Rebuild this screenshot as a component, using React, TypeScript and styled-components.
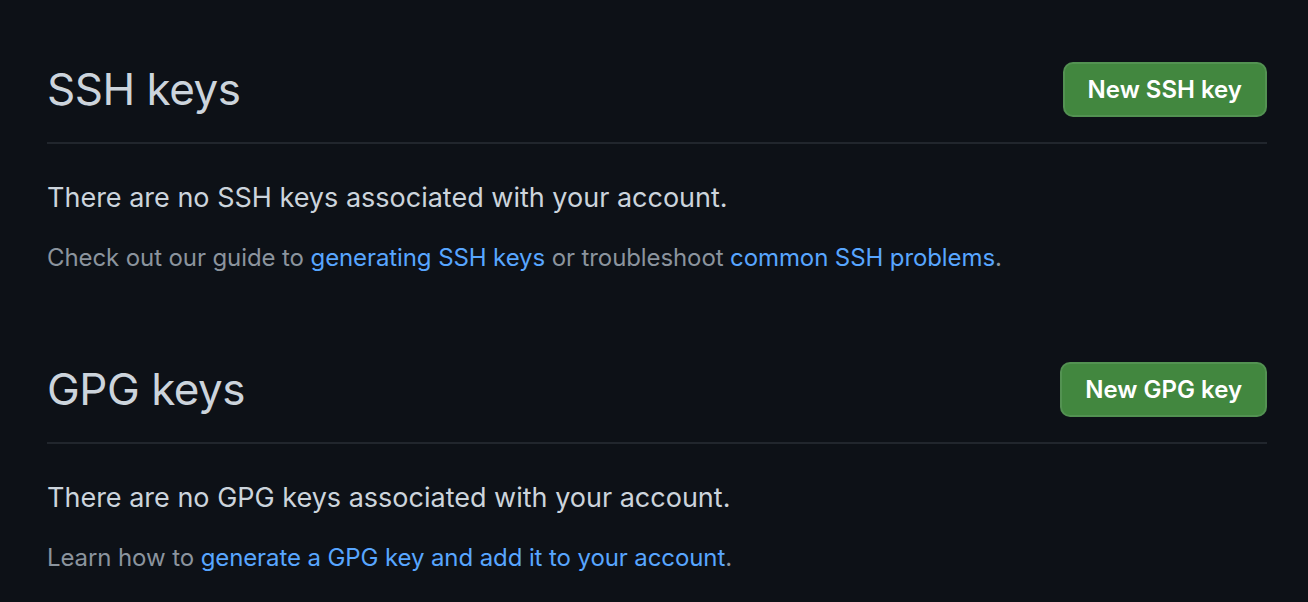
import React from 'react';
import styled, { createGlobalStyle } from 'styled-components';

const GlobalStyle = createGlobalStyle`
  *, *::before, *::after {
    box-sizing: border-box;
  }
  html, body {
    margin: 0;
    padding: 0;
    background-color: #0d1117;
  }
  body {
    font-family: Inter, "Noto Sans", "Liberation Sans", sans-serif;
    color: #c9d1d9;
  }
`;

const Page = styled.div`
  min-height: 602px;
  padding: 62px 41px 0 47px;
  background-color: #0d1117;
`;

const Section = styled.section`
  & + & {
    margin-top: 86px;
  }
`;

const Subhead = styled.div`
  display: flex;
  align-items: center;
  justify-content: space-between;
  padding-bottom: 25px;
  border-bottom: 2px solid #21262d;
`;

const Heading = styled.h2`
  margin: 0;
  font-size: 44px;
  font-weight: 400;
  letter-spacing: -0.5px;
  line-height: 55px;
  color: #ccd4dc;
`;

const Button = styled.button`
  height: 55px;
  padding: 0 23px;
  border: 2px solid rgba(240, 246, 252, 0.1);
  border-radius: 10px;
  background-color: #42873f;
  color: #ffffff;
  font-family: Inter, "Noto Sans", "Liberation Sans", sans-serif;
  font-size: 24px;
  font-weight: 600;
  cursor: pointer;
`;

const Blank = styled.p`
  margin: 35px 0 0;
  font-size: 27px;
  line-height: 38px;
  color: #ccd4dc;
`;

const Note = styled.p`
  margin: 23px 0 0;
  font-size: 24px;
  letter-spacing: -0.1px;
  line-height: 36px;
  color: #8b949e;
`;

const Link = styled.a`
  color: #58a6ff;
  text-decoration: none;
`;

export default function App() {
  return (
    <>
      <GlobalStyle />
      <Page>
        <Section>
          <Subhead>
            <Heading>SSH keys</Heading>
            <Button>New SSH key</Button>
          </Subhead>
          <Blank>There are no SSH keys associated with your account.</Blank>
          <Note>
            Check out our guide to <Link href="#">generating SSH keys</Link> or troubleshoot{' '}
            <Link href="#">common SSH problems</Link>.
          </Note>
        </Section>
        <Section>
          <Subhead>
            <Heading>GPG keys</Heading>
            <Button>New GPG key</Button>
          </Subhead>
          <Blank>There are no GPG keys associated with your account.</Blank>
          <Note>
            Learn how to <Link href="#">generate a GPG key and add it to your account</Link>.
          </Note>
        </Section>
      </Page>
    </>
  );
}
